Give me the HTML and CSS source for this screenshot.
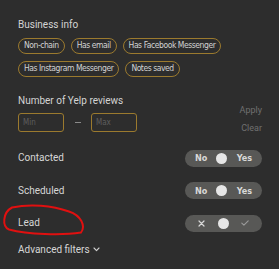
FILE: index.html
```html
<!DOCTYPE html>
<html lang="en">
<head>
  <meta charset="UTF-8" />
  <meta name="viewport" content="width=device-width, initial-scale=1.0"/>
  <title>Filters</title>
  <link rel="stylesheet" href="styles.css">
</head>
<body>
  <div class="filters">
    <section class="block">
      <h3 class="block-title">Business info</h3>
      <div class="chips">
        <span class="chip">Non-chain</span>
        <span class="chip">Has email</span>
        <span class="chip">Has Facebook Messenger</span>
        <span class="chip">Has Instagram Messenger</span>
        <span class="chip">Notes saved</span>
      </div>
    </section>

    <section class="block range-block">
      <div class="range-main">
        <h3 class="block-title">Number of Yelp reviews</h3>
        <div class="range">
          <input class="range-input" type="text" placeholder="Min" />
          <span class="range-dash"></span>
          <input class="range-input" type="text" placeholder="Max" />
        </div>
      </div>
      <div class="range-actions">
        <a class="link-btn">Apply</a>
        <a class="link-btn">Clear</a>
      </div>
    </section>

    <div class="toggle-rows">
      <div class="toggle-row">
        <span class="toggle-label">Contacted</span>
        <div class="toggle">
          <span>No</span>
          <span class="knob"></span>
          <span>Yes</span>
        </div>
      </div>
      <div class="toggle-row">
        <span class="toggle-label">Scheduled</span>
        <div class="toggle">
          <span>No</span>
          <span class="knob"></span>
          <span>Yes</span>
        </div>
      </div>
      <div class="toggle-row">
        <span class="toggle-label">Lead</span>
        <div class="toggle toggle-icons">
          <svg width="7" height="7" viewBox="0 0 7 7"><path d="M1 1 L6 6 M6 1 L1 6" stroke="#d8d8d8" stroke-width="1.2" fill="none" stroke-linecap="round"/></svg>
          <span class="knob"></span>
          <svg width="8" height="6" viewBox="0 0 8 6"><path d="M0.8 3.2 L2.9 5.2 L7.2 0.8" stroke="#9a9a9a" stroke-width="1.1" fill="none" stroke-linecap="round" stroke-linejoin="round"/></svg>
        </div>
      </div>
    </div>

    <div class="advanced">
      Advanced filters
      <svg width="7" height="5" viewBox="0 0 7 5"><path d="M1 1 L3.5 3.6 L6 1" stroke="#d0d0d0" stroke-width="1.1" fill="none" stroke-linecap="round" stroke-linejoin="round"/></svg>
    </div>
  </div>

  <!-- red marker drawn over the screenshot -->
  <svg class="annot" width="279" height="269" viewBox="0 0 279 269">
    <path d="M12 207.5 C30 203.5, 52 205.5, 69 211.5 C81 215.5, 86 226, 81 232.5 C62 235.5, 28 234.5, 9 229.5 C2 227, 2.5 212.5, 12 207.5" stroke="#e01010" stroke-width="2" fill="none" stroke-linecap="round"/>
  </svg>
</body>
</html>
```

FILE: styles.css
```css
* { margin: 0; padding: 0; box-sizing: border-box; }
body {
  font-family: Roboto, "Liberation Sans", sans-serif;
  background: #2d2d2d;
  color: #d6d6d6;
  width: 279px;
  height: 269px;
  overflow: hidden;
  position: relative;
}
.filters {
  padding: 19px 17px 0 18px;
}
.block-title {
  font-size: 10px;
  line-height: 12px;
  font-weight: 400;
  color: #d4d4d4;
}

.chips {
  display: flex;
  flex-wrap: wrap;
  gap: 7px 6px;
  margin-top: 7px;
}
.chip {
  height: 16px;
  padding: 0 5px;
  border: 1.5px solid #9b7a2e;
  border-radius: 8px;
  font-family: "Liberation Sans Narrow", "DejaVu Sans Condensed", sans-serif;
  font-size: 8.5px;
  letter-spacing: -0.45px;
  line-height: 13px;
  color: #d2d2d2;
  white-space: nowrap;
}

.range-block {
  display: flex;
  justify-content: space-between;
  margin-top: 18px;
}
.range {
  display: flex;
  align-items: center;
  margin-top: 6px;
}
.range-input {
  width: 46px;
  height: 19px;
  border: 1.5px solid #9b7a2e;
  border-radius: 3px;
  background: transparent;
  padding: 0 4px;
  font-family: "Liberation Sans Narrow", "DejaVu Sans Condensed", sans-serif;
  font-size: 8px;
  color: #ccc;
  outline: none;
}
.range-input::placeholder { color: #5e5e5e; }
.range-dash {
  width: 6px;
  height: 1px;
  background: #8a8a8a;
  margin: 0 10px 0 11px;
}
.range-actions {
  display: flex;
  flex-direction: column;
  align-items: flex-end;
  gap: 6px;
  padding-top: 8.5px;
}
.link-btn {
  font-size: 9px;
  line-height: 12px;
  color: #707070;
  cursor: pointer;
}

.toggle-rows {
  display: flex;
  flex-direction: column;
  gap: 15.5px;
  margin-top: 16px;
}
.toggle-row {
  display: flex;
  justify-content: space-between;
  align-items: center;
  height: 17px;
}
.toggle-label {
  font-size: 10px;
  line-height: 12px;
  color: #d6d6d6;
}
.toggle {
  width: 77px;
  height: 17px;
  border-radius: 9px;
  background: #585856;
  display: flex;
  justify-content: space-between;
  align-items: center;
  padding: 0 10px;
  font-family: "Liberation Sans Narrow", "DejaVu Sans Condensed", sans-serif;
  font-size: 9px;
  font-weight: 700;
  color: #d8d8d8;
}
.toggle-icons { padding: 0 13px 0 13px; }
.knob {
  width: 11px;
  height: 11px;
  border-radius: 50%;
  background: #e6e6e6;
}

.advanced {
  display: flex;
  align-items: center;
  gap: 3px;
  margin-top: 12px;
  font-size: 10px;
  line-height: 12px;
  color: #d6d6d6;
}

.annot {
  position: absolute;
  left: 0;
  top: 0;
  pointer-events: none;
}
```
